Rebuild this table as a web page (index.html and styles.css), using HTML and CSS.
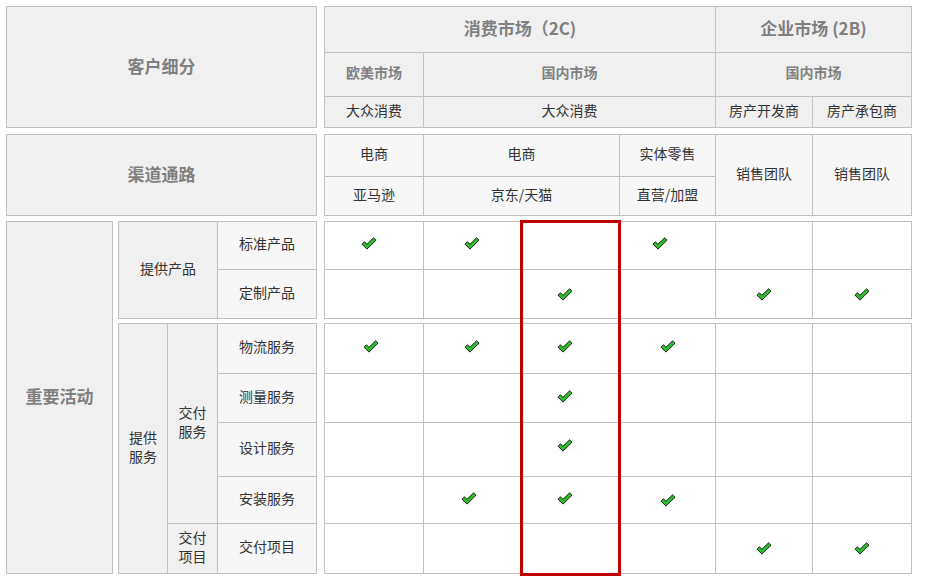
FILE: index.html
```html
<!DOCTYPE html>
<html lang="zh-CN">
<head>
<meta charset="utf-8">
<title>商业模式</title>
<link rel="stylesheet" href="styles.css">
</head>
<body>
<svg class="defs" width="0" height="0" aria-hidden="true">
  <defs>
    <symbol id="chk" viewBox="0 0 16 13">
      <path d="M1 7.2 L3.4 4.8 L6 7.3 L12.6 0.8 L15 3.2 L6 12.1 Z" fill="#2cbf2c" stroke="#1d1d1d" stroke-width="1" stroke-linejoin="miter"/>
    </symbol>
  </defs>
</svg>
<div class="page">
  <!-- Band 1: customer segments -->
  <div class="band band1">
    <div class="hbox">客户细分</div>
    <div class="tbl seg">
      <div class="c h1 s4">消费市场（2C)</div>
      <div class="c h1 s2">企业市场 (2B)</div>
      <div class="c h2">欧美市场</div>
      <div class="c h2 s3">国内市场</div>
      <div class="c h2 s2">国内市场</div>
      <div class="c h3">大众消费</div>
      <div class="c h3 s3">大众消费</div>
      <div class="c h3">房产开发商</div>
      <div class="c h3">房产承包商</div>
    </div>
  </div>

  <!-- Band 2: channels -->
  <div class="band band2">
    <div class="hbox">渠道通路</div>
    <div class="tbl chan">
      <div class="c ch">电商</div>
      <div class="c ch s2">电商</div>
      <div class="c ch">实体零售</div>
      <div class="c ch r2">销售团队</div>
      <div class="c ch r2">销售团队</div>
      <div class="c ch">亚马逊</div>
      <div class="c ch s2">京东/天猫</div>
      <div class="c ch">直营/加盟</div>
    </div>
  </div>

  <!-- Band 3: key activities -->
  <div class="band band3">
    <div class="left3">
      <div class="hbox">重要活动</div>
      <div class="subs">
        <div class="tbl prod-l">
          <div class="c grp r2">提供产品</div>
          <div class="c item">标准产品</div>
          <div class="c item">定制产品</div>
        </div>
        <div class="tbl serv-l">
          <div class="c grp r5">提供<br>服务</div>
          <div class="c grp r4">交付<br>服务</div>
          <div class="c item">物流服务</div>
          <div class="c item">测量服务</div>
          <div class="c item">设计服务</div>
          <div class="c item">安装服务</div>
          <div class="c grp">交付<br>项目</div>
          <div class="c item">交付项目</div>
        </div>
      </div>
    </div>
    <div class="right3">
      <div class="tbl prod-r">
        <div class="c d"><svg class="ck ck-l5"><use href="#chk"/></svg></div>
        <div class="c d"><svg class="ck"><use href="#chk"/></svg></div>
        <div class="c d"></div>
        <div class="c d"><svg class="ck ck-l8"><use href="#chk"/></svg></div>
        <div class="c d"></div>
        <div class="c d"></div>

        <div class="c d"></div>
        <div class="c d"></div>
        <div class="c d"><svg class="ck ck-l5 ck-dn"><use href="#chk"/></svg></div>
        <div class="c d"></div>
        <div class="c d"><svg class="ck ck-dn"><use href="#chk"/></svg></div>
        <div class="c d"><svg class="ck ck-dn"><use href="#chk"/></svg></div>
      </div>
      <div class="tbl serv-r">
        <div class="c d"><svg class="ck ck-l3"><use href="#chk"/></svg></div>
        <div class="c d"><svg class="ck"><use href="#chk"/></svg></div>
        <div class="c d"><svg class="ck ck-l5"><use href="#chk"/></svg></div>
        <div class="c d"><svg class="ck"><use href="#chk"/></svg></div>
        <div class="c d"></div>
        <div class="c d"></div>

        <div class="c d"></div>
        <div class="c d"></div>
        <div class="c d"><svg class="ck ck-l5"><use href="#chk"/></svg></div>
        <div class="c d"></div>
        <div class="c d"></div>
        <div class="c d"></div>

        <div class="c d"></div>
        <div class="c d"></div>
        <div class="c d"><svg class="ck ck-l5 ck-up"><use href="#chk"/></svg></div>
        <div class="c d"></div>
        <div class="c d"></div>
        <div class="c d"></div>

        <div class="c d"></div>
        <div class="c d"><svg class="ck ck-l3"><use href="#chk"/></svg></div>
        <div class="c d"><svg class="ck ck-l5"><use href="#chk"/></svg></div>
        <div class="c d"><svg class="ck ck-dn"><use href="#chk"/></svg></div>
        <div class="c d"></div>
        <div class="c d"></div>

        <div class="c d"></div>
        <div class="c d"></div>
        <div class="c d"></div>
        <div class="c d"></div>
        <div class="c d"><svg class="ck ck-dn"><use href="#chk"/></svg></div>
        <div class="c d"><svg class="ck ck-dn"><use href="#chk"/></svg></div>
      </div>
      <div class="highlight"></div>
    </div>
  </div>
</div>
</body>
</html>
```

FILE: styles.css
```css
* { box-sizing: border-box; }

html, body {
  margin: 0;
  padding: 0;
  background: #ffffff;
}

body {
  font-family: "Noto Sans CJK SC", "Microsoft YaHei", sans-serif;
  font-size: 14px;
  color: #333333;
}

.defs { position: absolute; width: 0; height: 0; overflow: hidden; }

.page {
  display: flex;
  flex-direction: column;
  padding: 6px;
}

.band {
  display: grid;
  grid-template-columns: 311px 588px;
  column-gap: 7px;
}
.band1 { height: 122px; }
.band2 { height: 82px; margin-top: 6px; }
.band3 { height: 353px; margin-top: 5px; }

.hbox {
  border: 1px solid #c0c0c0;
  background: #f0f0f0;
  display: flex;
  align-items: center;
  justify-content: center;
  font-weight: bold;
  font-size: 17px;
  color: #7f7f7f;
  padding-bottom: 4px;
}

.tbl {
  display: grid;
  background: #c0c0c0;
  gap: 1px;
  padding: 1px;
}

.c {
  display: flex;
  align-items: center;
  justify-content: center;
  text-align: center;
  line-height: 19px;
  padding-bottom: 4px;
}

.s2 { grid-column: span 2; }
.s3 { grid-column: span 3; }
.s4 { grid-column: span 4; }
.r2 { grid-row: span 2; }
.r4 { grid-row: span 4; }
.r5 { grid-row: span 5; }

.seg {
  grid-template-columns: 98px 96px 98px 95px 96px 98px;
  grid-template-rows: 45px 43px 30px;
}
.chan {
  grid-template-columns: 98px 96px 98px 95px 96px 98px;
  grid-template-rows: 41px 38px;
}

.h1 { background: #f0f0f0; font-weight: bold; font-size: 17px; color: #7f7f7f; }
.h2 { background: #f0f0f0; font-weight: bold; font-size: 14px; color: #808080; }
.h3 { background: #f0f0f0; }
.ch { background: #f7f7f7; }
.grp { background: #f0f0f0; }
.item { background: #f7f7f7; }
.d { background: #ffffff; }

.left3 {
  display: flex;
  gap: 5px;
}
.left3 .hbox { width: 107px; }
.subs {
  width: 199px;
  display: flex;
  flex-direction: column;
  gap: 4px;
}

.prod-l {
  grid-template-columns: 98px 98px;
  grid-template-rows: 47px 48px;
}
.prod-l .grp { grid-row: 1 / span 2; }

.serv-l {
  grid-template-columns: 48px 49px 98px;
  grid-template-rows: 49px 48px 53px 46px 49px;
}
.serv-l .r5 { grid-column: 1; grid-row: 1 / span 5; }
.serv-l .r4 { grid-column: 2; grid-row: 1 / span 4; }

.right3 {
  position: relative;
  display: flex;
  flex-direction: column;
  gap: 4px;
}
.prod-r {
  grid-template-columns: 98px 96px 98px 95px 96px 98px;
  grid-template-rows: 47px 48px;
}
.serv-r {
  grid-template-columns: 98px 96px 98px 95px 96px 98px;
  grid-template-rows: 49px 48px 53px 46px 49px;
}

.ck {
  width: 16px;
  height: 13px;
  display: block;
}
.ck-l3 { margin-right: 6px; }
.ck-l5 { margin-right: 10px; }
.ck-l8 { margin-right: 16px; }
.ck-dn { margin-top: 4px; }
.ck-up { margin-bottom: 4px; }

.highlight {
  position: absolute;
  left: 196px;
  top: -1px;
  width: 101px;
  height: 356px;
  border: 3px solid #c00000;
  pointer-events: none;
}
```
